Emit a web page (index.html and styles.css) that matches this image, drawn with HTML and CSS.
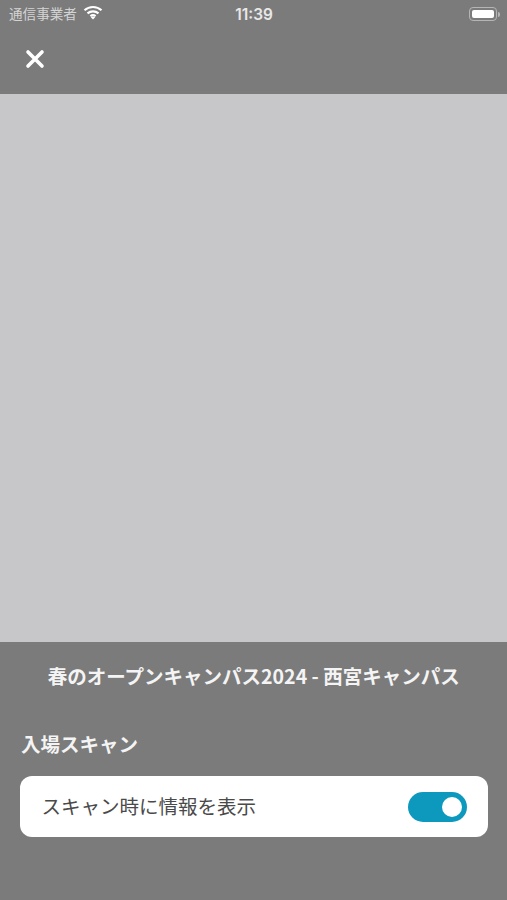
FILE: index.html
```html
<!DOCTYPE html>
<html lang="ja">
<head>
<meta charset="utf-8">
<title>入場スキャン</title>
<link rel="stylesheet" href="styles.css">
</head>
<body>
<div class="app">
  <header class="top">
    <div class="status">
      <div class="status-left">
        <span class="carrier">通信事業者</span>
        <svg class="wifi" viewBox="0 0 20 15" width="20" height="15" aria-hidden="true">
          <path d="M1.5 5.2C6.3.9 13.7.9 18.5 5.2M4.5 8.3c3.2-2.7 7.8-2.7 11 0M7.4 11.1c1.6-1.1 3.6-1.1 5.2 0" fill="none" stroke="#fff" stroke-width="2.2"/>
          <path d="M10 14.6l-2.2-2.4c1.3-.9 3.1-.9 4.4 0z" fill="#fff"/>
        </svg>
      </div>
      <span class="time">11:39</span>
      <div class="battery"><span class="battery-body"><span class="battery-fill"></span></span><span class="battery-cap"></span></div>
    </div>
    <div class="nav">
      <svg class="close" viewBox="0 0 20 20" width="20" height="20" aria-hidden="true">
        <path d="M3 3l14 14M17 3L3 17" stroke="#fff" stroke-width="3.6" stroke-linecap="round"/>
      </svg>
    </div>
  </header>
  <main class="camera"></main>
  <section class="panel">
    <h1 class="title">春のオープンキャンパス2024 - 西宮キャンパス</h1>
    <h2 class="label">入場スキャン</h2>
    <div class="card">
      <span class="card-text">スキャン時に情報を表示</span>
      <span class="toggle"><span class="knob"></span></span>
    </div>
  </section>
</div>
</body>
</html>
```
FILE: styles.css
```css
* { box-sizing: border-box; }
html, body { margin: 0; padding: 0; }
body {
  width: 507px;
  height: 900px;
  overflow: hidden;
  background: #7b7b7b;
  font-family: "Noto Sans CJK JP", "Noto Sans", sans-serif;
}
.app { display: flex; flex-direction: column; height: 900px; }
.top { height: 94px; background: #7b7b7b; flex: none; }
.status {
  height: 28px;
  display: grid;
  grid-template-columns: 1fr auto 1fr;
  align-items: center;
  padding: 0 7px 0 9px;
  color: #fff;
}
.status-left { display: flex; align-items: center; gap: 6px; }
.carrier { font-size: 13.6px; line-height: 28px; color: #d4d4d4; margin-top: -2px; }
.wifi { margin-top: -4px; }
.time { font-family: "Inter", sans-serif; font-size: 15.4px; font-weight: 600; color: #e8e8e8; margin-left: -1px; }
.battery { display: flex; align-items: center; justify-content: flex-end; }
.battery-body {
  width: 28px;
  height: 14px;
  border: 1px solid #b5b5b5;
  border-radius: 4px;
  padding: 2px;
  display: flex;
}
.battery-fill { flex: 1; background: #fff; border-radius: 2px; }
.battery-cap { width: 2px; height: 5px; background: #b5b5b5; border-radius: 0 2px 2px 0; margin-left: 1px; }
.nav { height: 66px; padding: 21px 0 0 25px; }
.close { display: block; }
.camera { height: 548px; flex: none; background: #c7c7c9; }
.panel { flex: 1; background: #7b7b7b; padding: 0 19.5px 0 20px; }
.title {
  margin: 20px 0 0;
  height: 28px;
  font-size: 19.5px;
  line-height: 28px;
  font-weight: 700;
  text-align: center;
  color: #f4f4f4;
  white-space: nowrap;
}
.label {
  margin: 40px 0 0 1px;
  font-size: 19.5px;
  line-height: 28px;
  font-weight: 700;
  color: #f4f4f4;
}
.card {
  margin-top: 18px;
  height: 61px;
  background: #fff;
  border-radius: 12px;
  display: flex;
  align-items: center;
  justify-content: space-between;
  padding: 0 21px 0 21.5px;
}
.card-text { font-size: 19.5px; color: #4a4a4a; margin-top: -2px; }
.toggle {
  width: 59px;
  height: 30px;
  border-radius: 15px;
  background: #0d99bd;
  display: flex;
  align-items: center;
  justify-content: flex-end;
  padding-right: 5px;
}
.knob { width: 20px; height: 20px; border-radius: 50%; background: #fff; }
```
